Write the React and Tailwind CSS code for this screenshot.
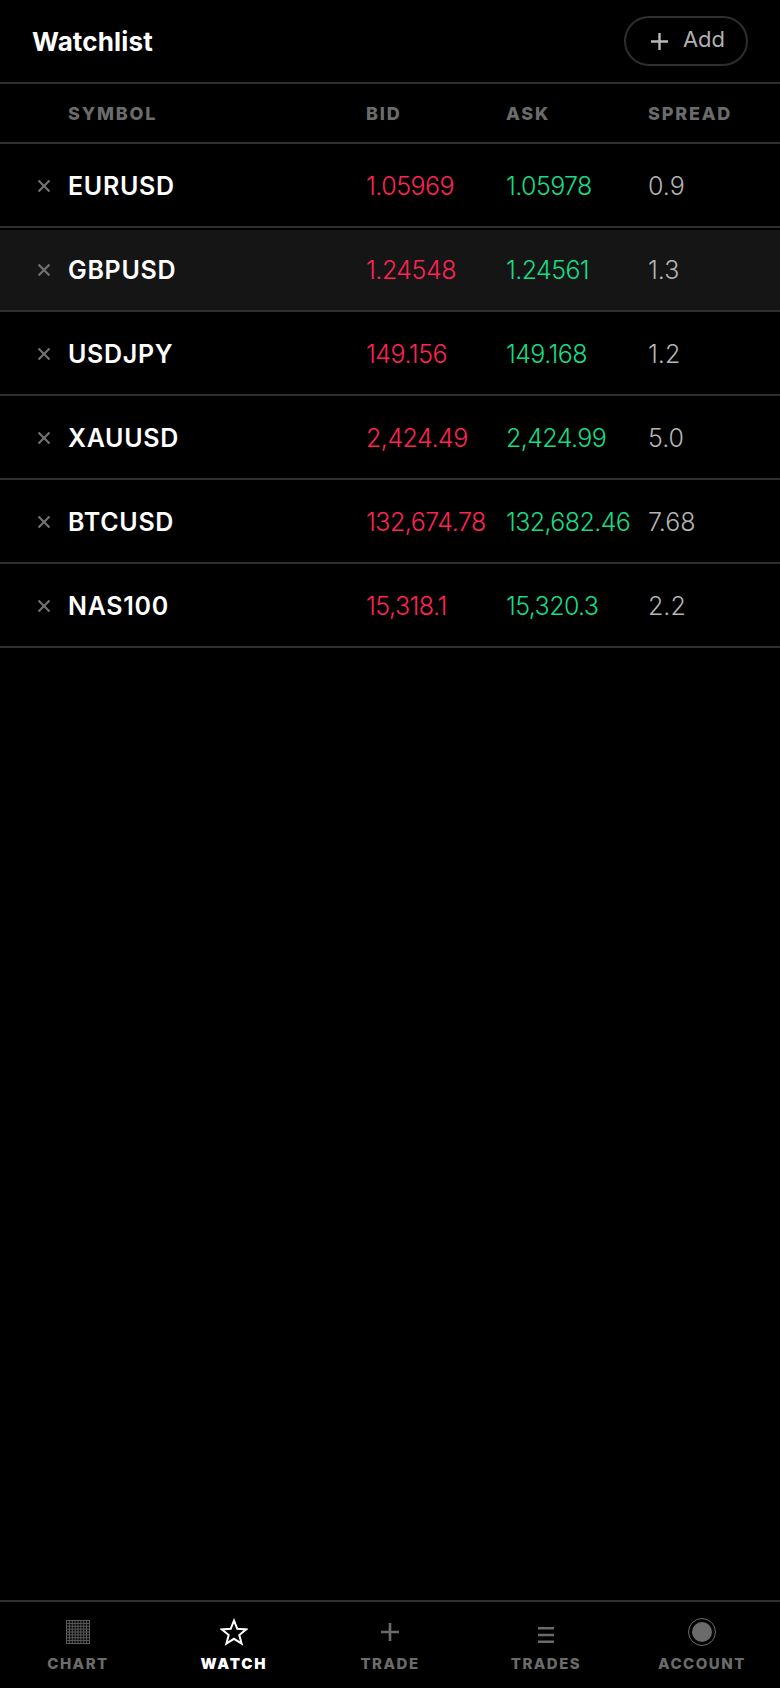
const rows = [
  { symbol: "EURUSD", bid: "1.05969", ask: "1.05978", spread: "0.9" },
  { symbol: "GBPUSD", bid: "1.24548", ask: "1.24561", spread: "1.3", active: true },
  { symbol: "USDJPY", bid: "149.156", ask: "149.168", spread: "1.2" },
  { symbol: "XAUUSD", bid: "2,424.49", ask: "2,424.99", spread: "5.0" },
  { symbol: "BTCUSD", bid: "132,674.78", ask: "132,682.46", spread: "7.68" },
  { symbol: "NAS100", bid: "15,318.1", ask: "15,320.3", spread: "2.2" },
];

function GridIcon() {
  const lines = [];
  for (let i = 0; i <= 8; i++) {
    const p = 0.5 + i * 2.875;
    lines.push(<path key={i} d={`M${p} 0V24M0 ${p}H24`} />);
  }
  return (
    <svg width="24" height="24" viewBox="0 0 24 24" fill="none" stroke="#5c5c5c" strokeWidth="1">
      {lines}
    </svg>
  );
}

function StarIcon() {
  return (
    <svg width="28" height="28" viewBox="0 0 28 28" fill="none" stroke="#fff" strokeWidth="2" strokeLinejoin="miter">
      <path d="M14 2.6l3.3 8.2 8.9.6-6.9 5.6 2.3 8.6L14 20.8l-7.6 4.8 2.3-8.6-6.9-5.6 8.9-.6z" />
    </svg>
  );
}

function NavItem({ label, active, children }) {
  return (
    <div className="flex-1 flex flex-col items-center">
      <div className="h-[30px] flex items-center justify-center">{children}</div>
      <span
        className={`mt-[8px] text-[15px] leading-[18px] ${
          active ? "text-white font-black tracking-[1.8px]" : "text-[#6b6b6b] font-extrabold tracking-[1.5px]"
        }`}
      >
        {label}
      </span>
    </div>
  );
}

export default function App() {
  return (
    <div className="w-[780px] h-[1688px] bg-black flex flex-col font-['Inter',sans-serif] overflow-hidden">
      <header className="h-[84px] flex items-center justify-between pl-8 pr-8 border-b-2 border-[#2e2e2e]">
        <h1 className="text-[26px] font-bold text-white tracking-[0.15px]">Watchlist</h1>
        <button className="w-[124px] h-[50px] pl-[4px] rounded-full border-2 border-[#2e2e2e] flex items-center justify-center gap-[15px] text-[#b0b0b0] text-[22px]">
          <svg width="17" height="17" viewBox="0 0 17 17" stroke="#b8b8b8" strokeWidth="2.4">
            <path d="M8.5 0V17M0 8.5H17" />
          </svg>
          <span className="mb-[3px]">Add</span>
        </button>
      </header>

      <div className="h-[60px] flex items-center pl-[68px] border-b-2 border-[#2e2e2e] text-[18px] font-extrabold tracking-[1.8px] text-[#6b6b6b]">
        <div className="w-[298px]">SYMBOL</div>
        <div className="w-[140px]">BID</div>
        <div className="w-[142px]">ASK</div>
        <div>SPREAD</div>
      </div>

      {rows.map((row) => (
        <div
          key={row.symbol}
          className={`h-[84px] flex items-center border-b-2 border-[#2e2e2e] text-[25px] ${
            row.active ? "border-t-2 border-t-black pb-[2px] bg-[#151515] bg-clip-padding" : ""
          }`}
        >
          <div className="w-[68px] flex justify-end pr-[18px] pt-[1px]">
            <svg width="12" height="12" viewBox="0 0 12 12" stroke="#707070" strokeWidth="2.2">
              <path d="M0.5 0.5L11.5 11.5M11.5 0.5L0.5 11.5" />
            </svg>
          </div>
          <div className="w-[298px] font-semibold text-white tracking-[0.7px] pt-[3px]">{row.symbol}</div>
          <div className="w-[140px] font-light text-[#ff2355] tracking-[-0.5px] whitespace-nowrap pt-[3px]">{row.bid}</div>
          <div className="w-[142px] font-light text-[#16dc86] tracking-[-0.6px] whitespace-nowrap pt-[3px]">{row.ask}</div>
          <div className="font-light text-[#b4b4b4] pt-[3px]">{row.spread}</div>
        </div>
      ))}

      <div className="flex-1" />

      <nav className="h-[88px] flex border-t-2 border-[#2e2e2e] pt-[15px]">
        <NavItem label="CHART"><GridIcon /></NavItem>
        <NavItem label="WATCH" active><StarIcon /></NavItem>
        <NavItem label="TRADE">
          <svg width="18" height="18" viewBox="0 0 18 18" stroke="#6b6b6b" strokeWidth="2.6">
            <path d="M9 0V18M0 9H18" />
          </svg>
        </NavItem>
        <NavItem label="TRADES">
          <svg className="mt-[6px]" width="16" height="16" viewBox="0 0 16 16" stroke="#6b6b6b" strokeWidth="2.4">
            <path d="M0 1.2H16M0 8H16M0 14.8H16" />
          </svg>
        </NavItem>
        <NavItem label="ACCOUNT">
          <svg width="28" height="28" viewBox="0 0 28 28">
            <circle cx="14" cy="14" r="13.5" fill="none" stroke="#6b6b6b" strokeWidth="1" />
            <circle cx="14" cy="14" r="10" fill="#6b6b6b" />
          </svg>
        </NavItem>
      </nav>
    </div>
  );
}
